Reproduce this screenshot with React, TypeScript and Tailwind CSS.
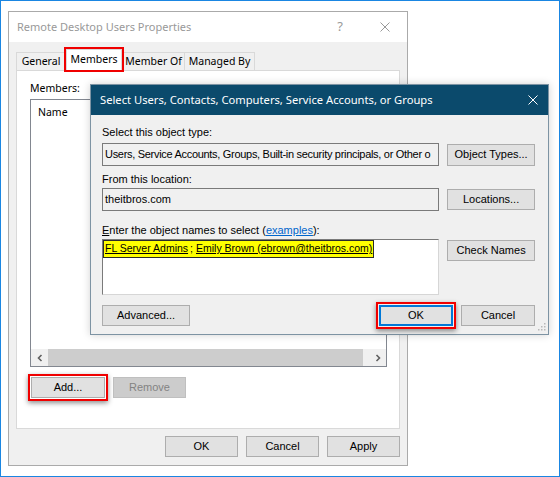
import type { ReactNode } from 'react'

const ui = "font-['Liberation_Sans',Arial,sans-serif]"
const seg = "font-['Noto_Sans','Open_Sans',sans-serif]"

function CloseX({ color }: { color: string }) {
  return (
    <svg width="10" height="10" viewBox="0 0 10 10" className="block">
      <path d="M0.5 0.5L9.5 9.5M9.5 0.5L0.5 9.5" stroke={color} strokeWidth="1" />
    </svg>
  )
}

function Chevron({ dir }: { dir: 'left' | 'right' }) {
  return (
    <svg width="6" height="8" viewBox="0 0 6 8" className="block">
      <path
        d={dir === 'left' ? 'M4.5 1L1.5 4L4.5 7' : 'M1.5 1L4.5 4L1.5 7'}
        stroke="#606060"
        strokeWidth="1.6"
        fill="none"
      />
    </svg>
  )
}

function Button({ children, className = '' }: { children: ReactNode; className?: string }) {
  return (
    <div className={`flex items-center justify-center border border-[#adadad] bg-[#e1e1e1] text-[11px] text-black ${className}`}>
      {children}
    </div>
  )
}

// red annotation box around a control
function Highlight({ children, className = '' }: { children: ReactNode; className?: string }) {
  return (
    <div className={`border-2 border-[#f00000] p-[1px] shadow-[0_2px_5px_rgba(0,0,0,0.45)] ${className}`}>
      {children}
    </div>
  )
}

export default function App() {
  return (
    <div className={`relative h-[477px] w-[560px] overflow-hidden border border-[#1a86e2] bg-white ${ui}`}>
      {/* Remote Desktop Users Properties (inactive window behind) */}
      <div className="ml-[7px] mt-[10px] flex h-[455px] w-[400px] flex-col border border-[#aaaaaa] bg-[#f0f0f0]">
        <div className={`flex h-[30px] items-center bg-white pl-[8px] pr-[17px] text-[#999999] ${seg}`}>
          <span className="text-[11px]">Remote Desktop Users Properties</span>
          <span className="ml-auto text-[13px]">?</span>
          <span className="ml-[37px]">
            <CloseX color="#999999" />
          </span>
        </div>

        <div className="flex flex-1 flex-col px-[7px] pt-[8px]">
          {/* tabs */}
          <div className={`flex h-[20px] items-end whitespace-nowrap text-[10.5px] text-black ${seg}`}>
            <div className="flex h-[18px] w-[50px] items-center justify-center border border-b-0 border-[#d9d9d9]">General</div>
            <div className="relative z-10 -mb-px flex h-[22px] w-[56px] items-center justify-center border border-b-0 border-[#d9d9d9] bg-white pb-[2px]">
              Members
              <span className="absolute -bottom-[1px] -left-[3px] -right-[3px] -top-[3px] border-2 border-[#f00000]" />
            </div>
            <div className="flex h-[18px] w-[63px] items-center justify-center border border-b-0 border-[#d9d9d9]">Member Of</div>
            <div className="-ml-px flex h-[18px] w-[71px] items-center justify-center border border-b-0 border-[#d9d9d9]">Managed By</div>
          </div>

          {/* Members tab panel */}
          <div className="flex h-[359px] flex-col border border-[#d9d9d9] bg-white pl-[13px]">
            <div className={`mt-[9px] text-[10.5px] leading-[16px] ${seg}`}>Members:</div>
            <div className="mt-[3px] flex h-[268px] w-[357px] flex-col border border-[#828790]">
              <div className={`flex h-[25px] items-center pl-[7px] text-[10.5px] ${seg}`}>Name</div>
              <div className="flex-1" />
              <div className="flex h-[17px] bg-[#f0f0f0]">
                <div className="flex w-[17px] items-center justify-center">
                  <Chevron dir="left" />
                </div>
                <div className="flex flex-1">
                  <div className="w-[315px] bg-[#cdcdcd]" />
                </div>
                <div className="flex w-[17px] items-center justify-center">
                  <Chevron dir="right" />
                </div>
              </div>
            </div>
            <div className="mt-[7px] flex items-center">
              <Highlight className="-ml-[2px]">
                <Button className="h-[21px] w-[74px]">Add...</Button>
              </Highlight>
              <div className="ml-[5px] flex h-[21px] w-[73px] items-center justify-center border border-[#bfbfbf] bg-[#cccccc] text-[11px] text-[#838383]">
                Remove
              </div>
            </div>
          </div>

          <div className="mt-[7px] flex justify-end gap-[8px]">
            <Button className="h-[21px] w-[73px]">OK</Button>
            <Button className="h-[21px] w-[73px]">Cancel</Button>
            <Button className="h-[21px] w-[73px]">Apply</Button>
          </div>
        </div>
      </div>

      {/* Select Users dialog (active window on top) */}
      <div className="absolute left-[89px] top-[83px] flex h-[251px] w-[459px] flex-col border border-[#7d93a3] bg-[#f0f0f0] shadow-[0_0_8px_rgba(0,0,0,0.18)]">
        <div className={`flex h-[30px] items-center bg-[#0b4a6c] pl-[9px] pr-[10px] text-white ${seg}`}>
          <span className="text-[11.2px]">Select Users, Contacts, Computers, Service Accounts, or Groups</span>
          <span className="ml-auto">
            <CloseX color="#ffffff" />
          </span>
        </div>

        <div className="relative flex flex-1 flex-col pl-[11px] pr-[13px] pt-[11px] text-[11px] text-black">
          <div className="leading-[13px]">Select this object type:</div>
          <div className="mt-[4px] flex items-center gap-[8px]">
            <div className="flex h-[23px] w-[338px] items-center overflow-hidden whitespace-nowrap border border-[#7a7a7a] pl-[2px] tracking-[-0.3px]">
              Users, Service Accounts, Groups, Built-in security principals, or Other o
            </div>
            <Button className="h-[22px] w-[88px]">Object Types...</Button>
          </div>

          <div className="mt-[7px] leading-[13px]">From this location:</div>
          <div className="mt-[2px] flex items-center gap-[8px]">
            <div className="flex h-[23px] w-[338px] items-center border border-[#7a7a7a] pl-[2px]">theitbros.com</div>
            <Button className="h-[21px] w-[88px]">Locations...</Button>
          </div>

          <div className="mt-[13px] leading-[13px]">
            <span className="underline">E</span>nter the object names to select (
            <span className="text-[#0066cc] underline">examples</span>):
          </div>
          <div className="mt-[2px] flex items-start gap-[8px]">
            <div className="h-[56px] w-[338px] border border-b-[#d6d6d6] border-l-[#7a7a7a] border-r-[#d6d6d6] border-t-[#7a7a7a] bg-white">
              <div className="inline-flex h-[18px] items-center whitespace-nowrap border border-[#2b2b2b] bg-[#ffff00] px-[1px] text-[10.5px]">
                <span className="underline">FL Server Admins</span>
                <span className="ml-[2px]">;</span>
                <span className="ml-[3px] underline">Emily Brown (ebrown@theitbros.com)</span>
              </div>
            </div>
            <Button className="mt-[1px] h-[21px] w-[88px]">Check Names</Button>
          </div>

          <div className="mt-[7px] flex items-center">
            <Button className="h-[21px] w-[88px]">Advanced...</Button>
            <Highlight className="ml-auto">
              <div className="flex h-[21px] w-[74px] items-center justify-center border-2 border-[#0078d7] bg-[#e1e1e1] text-[11px]">OK</div>
            </Highlight>
            <Button className="ml-[5px] h-[21px] w-[74px]">Cancel</Button>
          </div>

          {/* size grip */}
          <svg width="9" height="9" viewBox="0 0 9 9" className="absolute bottom-[3px] right-[2px]">
            <rect x="7" y="1" width="1.5" height="1.5" fill="#b8b8b8" />
            <rect x="4" y="4" width="1.5" height="1.5" fill="#b8b8b8" />
            <rect x="7" y="4" width="1.5" height="1.5" fill="#b8b8b8" />
            <rect x="1" y="7" width="1.5" height="1.5" fill="#b8b8b8" />
            <rect x="4" y="7" width="1.5" height="1.5" fill="#b8b8b8" />
            <rect x="7" y="7" width="1.5" height="1.5" fill="#b8b8b8" />
          </svg>
        </div>
      </div>
    </div>
  )
}
